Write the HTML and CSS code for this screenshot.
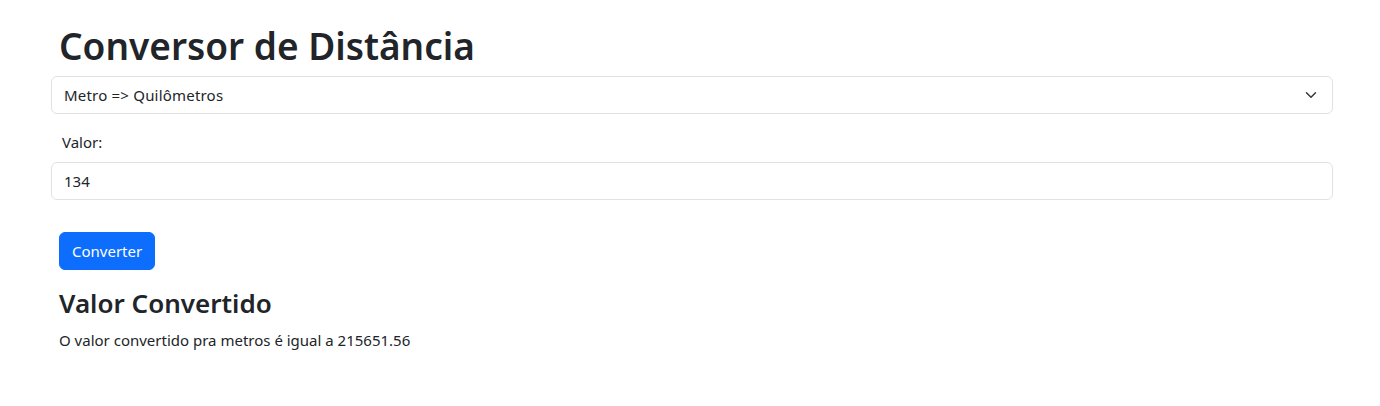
FILE: index.html
```html
<!DOCTYPE html>
<html lang="pt">
<head>
<meta charset="utf-8">
<title>Conversor de Distância</title>
<link rel="stylesheet" href="styles.css">
</head>
<body>
<main class="page">
  <h1 class="title">Conversor de Distância</h1>
  <div class="select">
    <span class="select-text">Metro =&gt; Quilômetros</span>
    <svg class="chevron" width="16" height="12" viewBox="0 0 16 16" aria-hidden="true"><path d="m2 5 6 6 6-6" fill="none" stroke="#343a40" stroke-width="2" stroke-linecap="round" stroke-linejoin="round"/></svg>
  </div>
  <label class="label">Valor:</label>
  <div class="input">134</div>
  <button class="btn">Converter</button>
  <h2 class="subtitle">Valor Convertido</h2>
  <p class="result">O valor convertido pra metros é igual a 215651.56</p>
</main>
</body>
</html>
```
FILE: styles.css
```css
html, body {
  margin: 0;
  padding: 0;
  background: #fff;
}
body {
  font-family: "Noto Sans", "Open Sans", sans-serif;
  font-size: 15px;
  color: #212529;
}
.page {
  display: flex;
  flex-direction: column;
  align-items: flex-start;
  padding: 22px 47px 0 51px;
}
.title {
  margin: 0 0 6px 8px;
  font-size: 37px;
  font-weight: 600;
  line-height: 48px;
}
.select, .input {
  box-sizing: border-box;
  width: 100%;
  height: 38px;
  border: 1px solid #dee2e6;
  border-radius: 6px;
  display: flex;
  align-items: center;
  padding: 0 12px;
  line-height: 24px;
}
.select { justify-content: space-between; }
.select-text { letter-spacing: 0.2px; }
.chevron { flex: none; margin-right: 1px; }
.label {
  margin: 16px 0 8px 11px;
  line-height: 24px;
}
.btn {
  margin: 32px 0 0 8px;
  height: 38px;
  padding: 0 12px;
  border: 1px solid #0d6efd;
  background: #0d6efd;
  color: #fff;
  border-radius: 6px;
  font-family: inherit;
  font-size: 15px;
  line-height: 24px;
}
.subtitle {
  margin: 17px 0 9px 8px;
  font-size: 26px;
  font-weight: 600;
  line-height: 32px;
}
.result {
  margin: 0 0 0 8px;
  line-height: 24px;
}
```
